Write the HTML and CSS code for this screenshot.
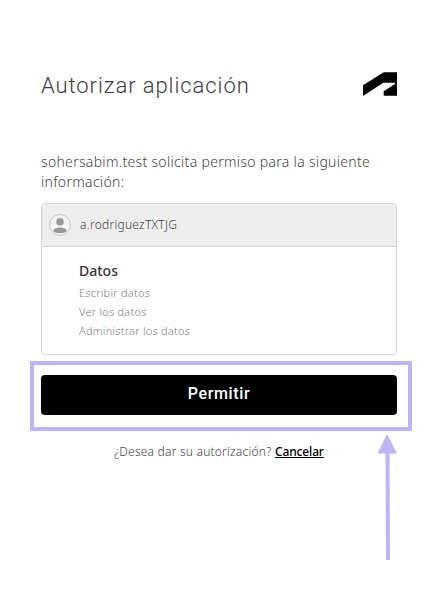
FILE: index.html
```html
<!DOCTYPE html>
<html lang="es">
<head>
<meta charset="utf-8">
<title>Autorizar aplicación</title>
<link rel="stylesheet" href="styles.css">
</head>
<body>
<main class="page">
  <header class="header">
    <h1>Autorizar aplicación</h1>
    <svg class="logo" width="36" height="24" viewBox="0 0 36 24"><path d="M1 23.7V13.3L21.7 0.3H35V23.7H21.7V19.3L33 12V10.7H21.3L1.3 23.7Z"/></svg>
  </header>
  <p class="intro"><span class="line-one">sohersabim.test solicita permiso para la siguiente</span><br><span class="line-two">información:</span></p>
  <section class="card">
    <div class="user">
      <svg class="avatar" width="22" height="22" viewBox="0 0 22 22"><circle cx="11" cy="11" r="10.5" fill="#f5f5f5" stroke="#c4c4c4"/><circle cx="11" cy="7.8" r="3.8" fill="#999"/><ellipse cx="11" cy="16.4" rx="6.8" ry="2.8" fill="#999"/></svg>
      <span class="user-name">a.rodriguezTXTJG</span>
    </div>
    <div class="scopes">
      <h2>Datos</h2>
      <ul>
        <li>Escribir datos</li>
        <li>Ver los datos</li>
        <li>Administrar los datos</li>
      </ul>
    </div>
  </section>
  <div class="highlight"><button class="allow" type="button">Permitir</button></div>
  <p class="deny"><span class="question">¿Desea dar su autorización?</span><a class="cancel" href="#">Cancelar</a></p>
  <svg class="arrow" width="22" height="128" viewBox="0 0 22 128"><path d="M10.1 2L20 21.5H12.5L13 128H9L8.5 21.5H0.3Z"/></svg>
</main>
</body>
</html>
```
FILE: styles.css
```css
* { box-sizing: border-box; }
body { margin: 0; background: #fff; color: #444; font-family: "Noto Sans", sans-serif; font-weight: 300; }
h1, h2, p, ul { margin: 0; padding: 0; font-weight: 300; }
.page { position: relative; width: 439px; height: 595px; padding: 70px 42px 0 41px; overflow: hidden; white-space: nowrap; }
.header { display: flex; justify-content: space-between; height: 82px; }
h1 { padding-top: 1px; font: 300 22px/30px Roboto, sans-serif; letter-spacing: .92px; color: #3c3c3c; }
.logo { margin: 2px -1px 0 0; fill: #000; }
.intro { height: 51px; font-size: 14px; line-height: 20px; letter-spacing: .31px; }
.card { width: 356px; height: 152px; border: 1px solid #d6d6d6; border-radius: 4px; overflow: hidden; }
.user { display: flex; align-items: center; height: 43px; padding-left: 7px; gap: 9px; background: #eee; border-bottom: 1px solid #d2d2d2; font-size: 12px; letter-spacing: .26px; }
.user-name { margin-top: -2px; }
.scopes { padding: 14px 0 0 37px; }
h2 { font-size: 14px; line-height: 20px; font-weight: 500; color: #333; }
ul { list-style: none; font-size: 11px; line-height: 19px; color: #808080; padding-top: 2px; letter-spacing: .25px; }
.highlight { width: 382px; height: 70px; margin: 6px 0 0 -11px; padding: 10px 7px; border: 4px solid #bfb3fa; }
.allow { display: block; width: 356px; height: 40px; border: 0; border-radius: 4px; padding: 0 0 3px; background: #000; color: #fff; font: 500 16px/20px Roboto, sans-serif; letter-spacing: .65px; }
.deny { display: flex; gap: 4px; padding: 11px 0 0 73px; font-size: 12px; line-height: 20px; }
.question { width: 157px; letter-spacing: .22px; }
.cancel { color: #000; font-weight: 500; letter-spacing: -.15px; }
.arrow { position: absolute; left: 377px; top: 432px; fill: #bfb3fa; }
```
